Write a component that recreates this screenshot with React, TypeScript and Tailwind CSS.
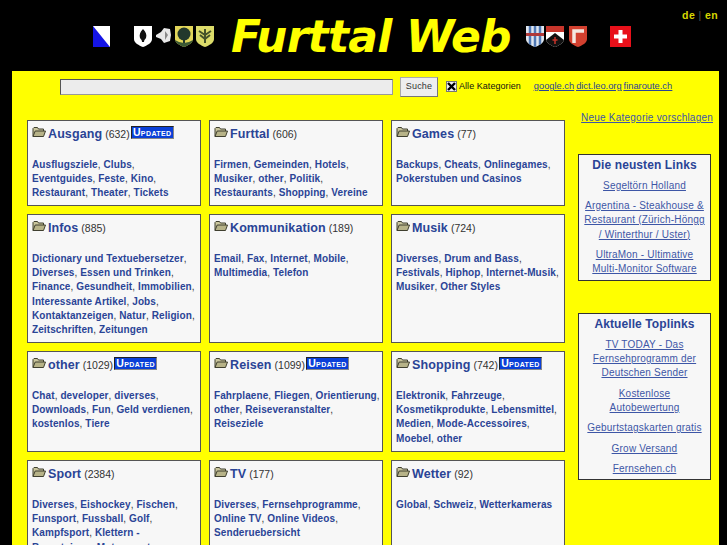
import React from "react";

const Folder = () => (
  <svg width="14" height="12" viewBox="0 0 14 12" className="shrink-0">
    <path d="M1 10.5V2.5L2 1.5H5.5L6.5 3H11.5V5" fill="#c9c59c" stroke="#3f3f2f" strokeWidth="1" />
    <path d="M1 10.5L3.2 5H13.5L11.5 10.5Z" fill="#b7b388" stroke="#3f3f2f" strokeWidth="1" />
  </svg>
);

const Badge = () => (
  <span className="shrink-0 block h-[13px] w-[43px] ml-[1px] mt-[0px] border border-[#222] border-r-[#888] border-b-[#888] bg-[#0a3fd8] text-white text-[10.5px] leading-[10px] font-bold tracking-[0.4px] text-center [font-variant:small-caps] overflow-hidden whitespace-nowrap">
    Updated
  </span>
);

type Cat = { name: string; count: string; badge?: boolean; lines: string[][]; h: string };

const cats: Cat[] = [
  { name: "Ausgang", count: "(632)", badge: true, h: "h-[86px]", lines: [["Ausflugsziele", "Clubs"], ["Eventguides", "Feste", "Kino"], ["Restaurant", "Theater", "Tickets"]] },
  { name: "Furttal", count: "(606)", h: "h-[86px]", lines: [["Firmen", "Gemeinden", "Hotels"], ["Musiker", "other", "Politik"], ["Restaurants", "Shopping", "Vereine"]] },
  { name: "Games", count: "(77)", h: "h-[86px]", lines: [["Backups", "Cheats", "Onlinegames"], ["Pokerstuben und Casinos"]] },
  { name: "Infos", count: "(885)", h: "h-[129px]", lines: [["Dictionary und Textuebersetzer"], ["Diverses", "Essen und Trinken"], ["Finance", "Gesundheit", "Immobilien"], ["Interessante Artikel", "Jobs"], ["Kontaktanzeigen", "Natur", "Religion"], ["Zeitschriften", "Zeitungen"]] },
  { name: "Kommunikation", count: "(189)", h: "h-[129px]", lines: [["Email", "Fax", "Internet", "Mobile"], ["Multimedia", "Telefon"]] },
  { name: "Musik", count: "(724)", h: "h-[129px]", lines: [["Diverses", "Drum and Bass"], ["Festivals", "Hiphop", "Internet-Musik"], ["Musiker", "Other Styles"]] },
  { name: "other", count: "(1029)", badge: true, h: "h-[101px]", lines: [["Chat", "developer", "diverses"], ["Downloads", "Fun", "Geld verdienen"], ["kostenlos", "Tiere"]] },
  { name: "Reisen", count: "(1099)", badge: true, h: "h-[101px]", lines: [["Fahrplaene", "Fliegen", "Orientierung"], ["other", "Reiseveranstalter"], ["Reiseziele"]] },
  { name: "Shopping", count: "(742)", badge: true, h: "h-[101px]", lines: [["Elektronik", "Fahrzeuge"], ["Kosmetikprodukte", "Lebensmittel"], ["Medien", "Mode-Accessoires"], ["Moebel", "other"]] },
  { name: "Sport", count: "(2384)", h: "h-[130px]", lines: [["Diverses", "Eishockey", "Fischen"], ["Funsport", "Fussball", "Golf"], ["Kampfsport", "Klettern -"], ["Bergsteigen", "Motorsport"]] },
  { name: "TV", count: "(177)", h: "h-[130px]", lines: [["Diverses", "Fernsehprogramme"], ["Online TV", "Online Videos"], ["Senderuebersicht"]] },
  { name: "Wetter", count: "(92)", h: "h-[130px]", lines: [["Global", "Schweiz", "Wetterkameras"]] },
];

const Shield = ({ children, bg = "#fff" }: { children?: React.ReactNode; bg?: string }) => (
  <svg width="18" height="21" viewBox="0 0 18 21" className="shrink-0">
    <defs>
      <clipPath id="sh"><path d="M0 0H18V13C18 17 13 19.5 9 21C5 19.5 0 17 0 13Z" /></clipPath>
    </defs>
    <g clipPath="url(#sh)">
      <rect width="18" height="21" fill={bg} />
      {children}
    </g>
  </svg>
);

const Card = ({ c }: { c: Cat }) => (
  <div className={`${c.h} border border-[#555] bg-[#f7f7f7] pl-[4px] pr-[2px] pt-[5px]`}>
    <div className="flex items-start h-[16px]">
      <Folder />
      <span className="ml-[2px] text-[12.5px] leading-[16px] font-bold text-[#2a4496] tracking-[0.1px]">{c.name}</span>
      <span className="ml-[3px] text-[10.5px] leading-[17px] text-[#333]">{c.count}</span>
      {c.badge && <Badge />}
    </div>
    <p className="mt-[15.6px] text-[10px] leading-[14.33px] tracking-[0.1px] text-[#333] whitespace-nowrap">
      {c.lines.map((line, li) => (
        <span key={li} className="block">
          {line.map((l, i) => {
            const last = li === c.lines.length - 1 && i === line.length - 1;
            const noComma = last || l.endsWith("-");
            return (
              <React.Fragment key={l}>
                <span className="font-bold text-[#2a4496]">{l}</span>
                {noComma ? "" : ", "}
              </React.Fragment>
            );
          })}
        </span>
      ))}
    </p>
  </div>
);

const Side = ({ title, links, h }: { title: string; links: string[][]; h: string }) => (
  <div className={`${h} border border-[#333] bg-[#f7f7f7] px-[2px] pt-[2px] text-center`}>
    <div className="text-[12px] leading-[16px] font-bold text-[#2a4496] tracking-[0.1px]">{title}</div>
    <div className="mt-[5.6px] flex flex-col gap-[6px]">
      {links.map((l) => (
        <a key={l[0]} className="block text-[10px] leading-[14.33px] tracking-[0.2px] text-[#3d56a6] underline whitespace-nowrap">
          {l.map((t) => <span key={t} className="block">{t}</span>)}
        </a>
      ))}
    </div>
  </div>
);

export default function App() {
  return (
    <div className="h-[545px] w-[727px] overflow-hidden bg-black font-['Liberation_Sans',sans-serif]">
      <header className="relative h-[71px] flex items-center pl-[93px] pt-[1px]">
        <svg width="17" height="21" viewBox="0 0 17 21" className="shrink-0">
          <rect width="17" height="21" fill="#fff" />
          <path d="M0 0L17 21H0Z" fill="#1414e6" />
        </svg>
        <div className="ml-[24px] flex items-center gap-[3px]">
          <Shield>
            <path d="M9 3C12 6 13 9 12 12C11 13.5 10 14 10 16H8C8 14 7 13.5 6 12C5 9 6 6 9 3Z" fill="#111" />
          </Shield>
          <svg width="17" height="20" viewBox="0 0 17 20" className="shrink-0">
            <path d="M1 9L6 6L9 2L15 3L16 9L15 15L9 17L6 13L1 11Z" fill="#e8e8e8" />
            <path d="M10 5L13 9L10 14" fill="#888" />
          </svg>
          <Shield bg="#e2d65a">
            <circle cx="9" cy="8" r="6.5" fill="#23382c" />
            <rect x="8" y="13" width="2" height="5" fill="#23382c" />
            <path d="M0 14Q9 20 18 14V21H0Z" fill="#3c5a34" />
          </Shield>
          <Shield bg="#dcdc6a">
            <path d="M9 3V17M9 9L3 5M9 9L15 5M9 13L4 9M9 13L14 9" stroke="#44532a" strokeWidth="2" fill="none" />
          </Shield>
        </div>
        <h1 className="ml-[17px] mt-[1px] font-['DejaVu_Sans',sans-serif] italic font-bold text-[44px] leading-[50px] tracking-[-0.75px] text-[#ffff00] whitespace-nowrap w-[279px]">Furttal Web</h1>
        <div className="ml-[16px] flex items-center gap-[2px]">
          <Shield bg="#dfe6ef">
            <path d="M4 0V21M9 0V21M14 0V21" stroke="#4f78b4" strokeWidth="2.5" />
            <rect y="7" width="18" height="3" fill="#b03a3a" />
          </Shield>
          <Shield bg="#fff">
            <rect width="18" height="6" fill="#c8352b" />
            <path d="M0 14L9 7L18 14V21H0Z" fill="#111" />
            <path d="M9 11V18M6.5 14H11.5" stroke="#c8352b" strokeWidth="1.5" />
          </Shield>
          <span className="w-[1px]" />
          <Shield bg="#d2402f">
            <path d="M5 17V5H15" stroke="#f3e7e0" strokeWidth="3.5" fill="none" />
          </Shield>
        </div>
        <svg width="21" height="21" viewBox="0 0 21 21" className="ml-[23px] shrink-0">
          <rect width="21" height="21" fill="#e8101a" />
          <path d="M8.5 4H12.5V8.5H17V12.5H12.5V17H8.5V12.5H4V8.5H8.5Z" fill="#fff" />
        </svg>
        <div className="absolute right-[9px] top-[8px] text-[10.5px] leading-[14px] tracking-[0.4px] font-bold text-[#d8d800]">
          de <span className="font-normal text-[#555]">|</span> en
        </div>
      </header>

      <main className="mx-[12px] w-[707px] h-[474px] bg-[#ffff00] overflow-hidden">
        <form className="h-[49px] flex items-start pl-[48px] pt-[6px]">
          <input className="mt-[2px] w-[333px] h-[16px] bg-[#ececec] border border-[#555] border-b-[#999] border-r-[#999]" />
          <button type="button" className="ml-[7px] w-[38px] h-[20px] bg-[#eeeeee] border border-[#aaa] border-b-[#777] border-r-[#777] text-[9px] tracking-[0.2px] text-[#333]">Suche</button>
          <span className="ml-[8px] mt-[4px] w-[11px] h-[11px] bg-[#eee] border border-[#777] flex items-center justify-center">
            <svg width="9" height="9" viewBox="0 0 9 9"><path d="M1 1L8 8M8 1L1 8" stroke="#000" strokeWidth="2.4" /></svg>
          </span>
          <span className="ml-[2px] mt-[2px] text-[9px] leading-[15px] tracking-[0.05px] text-[#111]">Alle Kategorien</span>
          <span className="ml-[13px] mt-[2px] text-[9.3px] leading-[15px] flex gap-[2px] text-[#2a4496] underline">
            <a>google.ch</a><a>dict.leo.org</a><a>finaroute.ch</a>
          </span>
        </form>
        <div className="flex pl-[15px]">
          <div className="grid grid-cols-[174px_174px_174px] gap-[8px] w-[538px] content-start">
            {cats.map((c) => <Card key={c.name} c={c} />)}
          </div>
          <aside className="ml-[13px] w-[133px] flex flex-col">
            <a className="-mt-[9px] mb-[29px] block self-end -mr-[2px] whitespace-nowrap text-[10px] leading-[14px] tracking-[0.22px] text-[#3d56a6] underline">Neue Kategorie vorschlagen</a>
            <Side h="h-[127px]" title="Die neusten Links" links={[["Segeltörn Holland"], ["Argentina - Steakhouse &", "Restaurant (Zürich-Höngg", "/ Winterthur / Uster)"], ["UltraMon - Ultimative", "Multi-Monitor Software"]]} />
            <div className="h-[32px]" />
            <Side h="h-[167px]" title="Aktuelle Toplinks" links={[["TV TODAY - Das", "Fernsehprogramm der", "Deutschen Sender"], ["Kostenlose", "Autobewertung"], ["Geburtstagskarten gratis"], ["Grow Versand"], ["Fernsehen.ch"]]} />
          </aside>
        </div>
      </main>
    </div>
  );
}
